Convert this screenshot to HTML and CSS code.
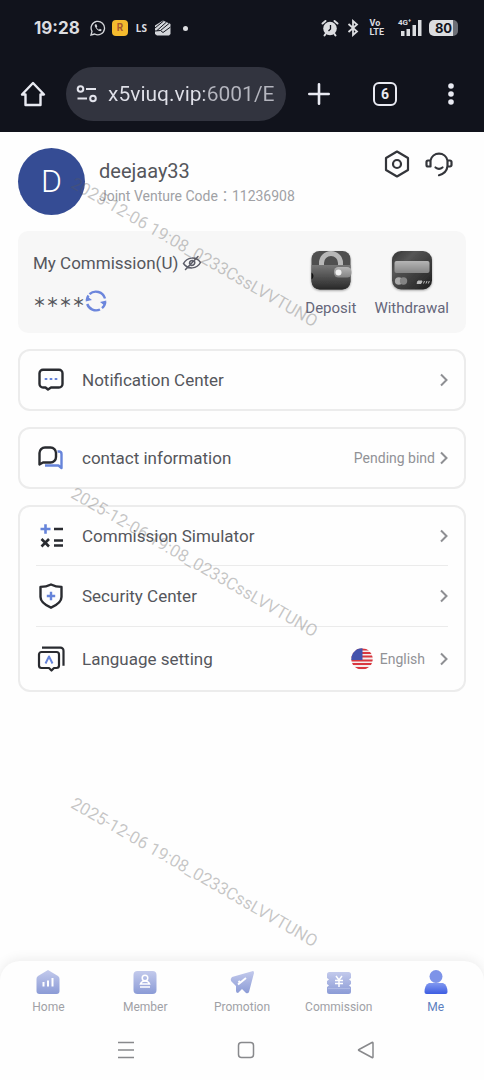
FILE: index.html
```html
<!DOCTYPE html>
<html lang="en">
<head>
<meta charset="utf-8">
<meta name="viewport" content="width=device-width, initial-scale=1">
<title>Me</title>
<link rel="stylesheet" href="styles.css">
</head>
<body>
<div class="screen">
  <header class="chrome">
    <div class="status">
      <span class="clock">19:28</span>
      <svg class="st" width="16" height="16" viewBox="0 0 16 16" fill="none" stroke="#d4d6da" stroke-width="1.3"><path d="M1 15l1-3.600A6.700 6.700 0 1 1 4.700 14z"/><path d="M5.300 4.300c-1 .8-.8 2.400 1.300 4.700 2.200 2.300 3.900 2.800 4.800 1.600l.3-.8-1.800-1-1 .9C8 9.400 6.900 8.300 6.600 7.300l.7-.9-.9-2.100z" fill="#d4d6da" stroke="none"/></svg>
      <span class="app-badge">R</span>
      <span class="ls">LS</span>
      <svg class="st" width="16" height="16" viewBox="0 0 16 16"><path d="M0 5.500L8 0.500 15.500 4v10L14 15.500H2L0 14z" fill="#d4d6da"/><path d="M0 8l8.500-7M2 10.500L11.500 2M5.500 10.500L14 3.500M0 11l5.500-.5L8 12.500 15.500 7" fill="none" stroke="#11131c" stroke-width="1"/></svg>
      <span class="dot"></span>
      <span class="fill"></span>
      <svg width="18" height="18" viewBox="0 0 18 18" fill="#dcdde0"><circle cx="9" cy="9.500" r="6.800"/><path d="M1.500 4.500L4.500 2M16.500 4.500L13.500 2M4.500 15l-1 1.500M13.500 15l1 1.500" stroke="#dcdde0" stroke-width="2" stroke-linecap="round"/><path d="M9.500 6v4L7.500 12" fill="none" stroke="#11131c" stroke-width="1.300"/></svg>
      <svg class="bt" width="12" height="18" viewBox="0 0 12 18" fill="none" stroke="#dcdde0" stroke-width="1.800"><path d="M1.500 5l8.500 7.500L6 16V2l4 3.500L1.500 13"/></svg>
      <span class="volte"><span>Vo</span><span>LTE</span></span>
      <span class="signal"><span class="gen">4G⁺</span>
        <svg width="22" height="18" viewBox="0 0 22 18" fill="#dcdde0"><path d="M1 12h3.500v5H1zM6.500 10H10v7H6.500zM12.500 6H16v11h-3.500zM18 1h3.500v16H18z"/></svg>
      </span>
      <span class="battery">80</span>
    </div>
    <div class="toolbar">
      <button class="tool" aria-label="Home"><svg width="26" height="26" viewBox="0 0 26 26" fill="none" stroke="#e9eaf2" stroke-width="2.400" stroke-linejoin="round"><path d="M2 13.500L13 2l11 11.500h-3.500V24h-15V13.500z"/></svg></button>
      <label class="url">
        <svg width="22" height="18" viewBox="0 0 22 18" fill="none" stroke="#e3e4ec" stroke-width="2"><circle cx="4.500" cy="4" r="2.800"/><circle cx="17" cy="13.500" r="2.800"/><path d="M10 4h10M1.500 13.500h9.500"/></svg>
        <input type="text" aria-label="Address" value="x5viuq.vip:6001/E">
      </label>
      <button class="tool" aria-label="New tab"><svg width="22" height="22" viewBox="0 0 22 22" stroke="#e9eaf2" stroke-width="2.600" stroke-linecap="round"><path d="M11 1.300v19.400M1.300 11h19.400"/></svg></button>
      <button class="tool" aria-label="Tabs"><span class="tabs-count">6</span></button>
      <button class="tool" aria-label="Menu"><svg width="6" height="22" viewBox="0 0 6 22" fill="#e9eaf2"><circle cx="3" cy="3" r="2.800"/><circle cx="3" cy="11" r="2.800"/><circle cx="3" cy="19" r="2.800"/></svg></button>
    </div>
  </header>

  <main class="page">
    <section class="profile">
      <span class="avatar">D</span>
      <div class="who">
        <h1 class="name">deejaay33</h1>
        <p class="code">Joint Venture Code：11236908</p>
      </div>
      <div class="actions">
        <button aria-label="Settings"><svg width="28" height="28" viewBox="0 0 28 28" fill="none" stroke="#33353a" stroke-width="2.200" stroke-linejoin="round"><path d="M14 1.500L25 8v12l-11 6.500L3 20V8z"/><circle cx="14" cy="14" r="4"/></svg></button>
        <button aria-label="Support"><svg width="28" height="28" viewBox="0 0 28 28" fill="none" stroke="#33353a" stroke-width="2.200" stroke-linecap="round" stroke-linejoin="round"><path d="M5.500 10.500a8.700 8.700 0 0 1 17 0v5.500c-.5 4.500-3.500 8-8.500 9.200M5.500 10.500H3a1.500 1.500 0 0 0-1.500 1.500v3A1.500 1.500 0 0 0 3 16.500h2.500zM22.500 10.500H25a1.500 1.500 0 0 1 1.500 1.500v3a1.500 1.500 0 0 1-1.500 1.500h-2.500M10.500 17.500q3.500 2.800 7 0"/></svg></button>
      </div>
    </section>

    <section class="wallet">
      <div class="balance">
        <div class="line">My Commission(U)
          <button aria-label="Show balance"><svg width="20" height="16" viewBox="0 0 20 16" fill="none" stroke="#5b5c68" stroke-width="1.500" stroke-linecap="round"><path d="M1.500 8.500C5 2 14 1 18.500 7.500 15 14 6 15 1.500 8.500zM3.500 14.500L16 1.500M12.500 6c1 2.500-.5 4.500-3.500 4.500M7.500 8.500c0-2 1-3 3-3"/></svg></button>
        </div>
        <div class="line amount">＊＊＊＊
          <button aria-label="Refresh"><svg width="22" height="22" viewBox="0 0 22 22" fill="none" stroke="#6c86dc" stroke-width="2.400"><path d="M4.500 4.200A9.400 9.400 0 0 1 20 8.500M20.300 11.500a9.400 9.400 0 0 1-3.300 6.700M15 19.500A9.400 9.400 0 0 1 2.200 14M1.700 10.500a9.400 9.400 0 0 1 1.800-5"/><path d="M15 12l4.500 3.500 1.800-5zM7 10L2.500 6.500.7 11.500z" fill="#6c86dc" stroke="none"/></svg></button>
        </div>
      </div>
      <button class="wallet-action">
        <svg width="44" height="44" viewBox="0 0 44 44"><defs><linearGradient id="g1" x2="0" y2="1"><stop stop-color="#777"/><stop offset="1" stop-color="#282828"/></linearGradient><linearGradient id="g2" x2="0" y2="1"><stop stop-color="#b5b5b5"/><stop offset="1" stop-color="#858585"/></linearGradient><filter id="sh" x="-20%" y="-20%" width="140%" height="150%"><feDropShadow dx="0" dy="1" stdDeviation="1.200" flood-opacity=".35"/></filter></defs><g filter="url(#sh)"><rect x="2.500" y="2" width="39" height="38.500" rx="8" fill="#505050"/><path d="M12.500 17V14a9.500 9.500 0 0 1 19 0v3" fill="none" stroke="#b8b8b8" stroke-width="5"/><path d="M2.500 16h39v16a8.500 8.500 0 0 1-8.500 8.500H11A8.500 8.500 0 0 1 2.500 32z" fill="url(#g1)"/></g><path d="M2.500 23.500q2 1 2 3.500t-2 3.500z" fill="#111"/><rect x="25" y="18" width="17.500" height="10.500" rx="4.500" fill="url(#g2)"/><circle cx="29.500" cy="23.500" r="3" fill="#f2f2f2"/></svg>
        Deposit
      </button>
      <button class="wallet-action">
        <svg width="44" height="44" viewBox="0 0 44 44"><defs><linearGradient id="g3" x2="1" y2="1"><stop stop-color="#333"/><stop offset=".3" stop-color="#555"/><stop offset="1" stop-color="#1e1e1e"/></linearGradient></defs><rect x="2" y="2" width="40" height="38.500" rx="9" fill="url(#g3)" filter="url(#sh)"/><rect x="4.500" y="12" width="35" height="12" rx="2" fill="url(#g2)"/><circle cx="8.700" cy="32" r="3.800" fill="#aaa"/><circle cx="13.500" cy="32" r="3.700" fill="#848484"/><path d="M27 34.500l1-2.500h4l-1 2.500zM33.500 34.500l1-2.500M36 34.500l1-2.500M38.300 34.500l1-2.500" fill="#bbb" stroke="#bbb"/></svg>
        Withdrawal
      </button>
    </section>

    <section class="box">
      <button class="row">
        <svg class="icon" width="28" height="28" viewBox="0 0 28 28" fill="none" stroke="#292b30" stroke-width="2.400" stroke-linejoin="round"><path d="M6 3.700h16a3.500 3.500 0 0 1 3.500 3.500V18a3.500 3.500 0 0 1-3.500 3.500h-8l-3 2-2.500-2H6A3.500 3.500 0 0 1 2.500 18V7.200A3.500 3.500 0 0 1 6 3.700z"/><path d="M7.700 13h2.600M12.700 13h2.600M17.700 13h2.600" stroke="#6684da" stroke-width="2"/></svg>
        <span class="label">Notification Center</span>
        <svg class="chev" width="8" height="14" viewBox="0 0 8 14"><path d="M1 1.500L6.500 7 1 12.500"/></svg>
      </button>
    </section>

    <section class="box">
      <button class="row">
        <svg class="icon" width="28" height="28" viewBox="0 0 28 28" fill="none" stroke-width="2.400" stroke-linejoin="round"><path d="M20.500 7.500h1.500a2.500 2.500 0 0 1 2.500 2.500v14l-3-2.500H8" stroke="#6684da"/><path d="M2.500 20.500V9a5.500 5.500 0 0 1 5.500-5.500h5.500a5.500 5.500 0 0 1 5.500 5.500v4a5.500 5.500 0 0 1-5.500 5.500H6z" stroke="#292b30" fill="#fff"/></svg>
        <span class="label">contact information</span>
        <span class="value">Pending bind</span>
        <svg class="chev" width="8" height="14" viewBox="0 0 8 14"><path d="M1 1.500L6.500 7 1 12.500"/></svg>
      </button>
    </section>

    <section class="box">
      <button class="row">
        <svg class="icon" width="28" height="28" viewBox="0 0 28 28" fill="none" stroke="#292b30" stroke-width="2.600"><path d="M3.500 7h10M8.500 2.200v9.600" stroke="#6684da"/><path d="M17 7h9M4.500 17l7.500 7.500M12 17l-7.500 7.500M17 18.500h9M17 23.500h9"/></svg>
        <span class="label">Commission Simulator</span>
        <svg class="chev" width="8" height="14" viewBox="0 0 8 14"><path d="M1 1.500L6.500 7 1 12.500"/></svg>
      </button>
      <button class="row">
        <svg class="icon" width="28" height="28" viewBox="0 0 28 28" fill="none" stroke="#292b30" stroke-width="2.400" stroke-linejoin="round"><path d="M14 2.500c3.500 1.800 6.500 2.400 10.500 2.400V15c0 4.500-4.500 8-10.500 10.700C8 23 3.500 19.500 3.500 15V4.900C7.500 4.900 10.500 4.300 14 2.500z"/><path d="M9.800 14h8.400M14 9.800v8.400" stroke="#6684da"/></svg>
        <span class="label">Security Center</span>
        <svg class="chev" width="8" height="14" viewBox="0 0 8 14"><path d="M1 1.500L6.500 7 1 12.500"/></svg>
      </button>
      <button class="row tall">
        <svg class="icon" width="28" height="28" viewBox="0 0 28 28" fill="none" stroke="#292b30" stroke-width="2.200" stroke-linejoin="round"><path d="M5 2.700h18.500a3 3 0 0 1 3 3v15"/><path d="M4.500 7h15A2.500 2.500 0 0 1 22 9.500v11a2.500 2.500 0 0 1-2.500 2.500H17l-2.500 2.500L12 23H4.500A2.500 2.500 0 0 1 2 20.500v-11A2.500 2.500 0 0 1 4.500 7z"/><path d="M8.500 18.500L12 11.500l3.500 7" stroke="#6684da" stroke-width="2"/></svg>
        <span class="label">Language setting</span>
        <svg class="flag" width="22" height="22" viewBox="0 0 22 22"><defs><clipPath id="c"><circle cx="11" cy="11" r="10.700"/></clipPath></defs><g clip-path="url(#c)"><path d="M0 0h22v22H0z" fill="#f4eeee"/><path d="M0 1.500h22M0 5h22M0 8.500h22M0 12.500h22M0 16h22M0 20h22" stroke="#d9373f" stroke-width="1.900"/><path d="M0 0h11.500v12H0z" fill="#4453ad"/></g></svg>
        <span class="value lang">English</span>
        <svg class="chev" width="8" height="14" viewBox="0 0 8 14"><path d="M1 1.500L6.500 7 1 12.500"/></svg>
      </button>
    </section>

    <div class="watermarks">
      <span>2025-12-06 19:08_0233CssLVVTUNO</span>
      <span>2025-12-06 19:08_0233CssLVVTUNO</span>
      <span>2025-12-06 19:08_0233CssLVVTUNO</span>
    </div>
  </main>

  <footer class="bottom">
    <nav class="tabbar">
      <a href="#home"><svg width="26" height="26" viewBox="0 0 26 26"><defs><linearGradient id="t" x2="0" y2="1"><stop stop-color="#c3caec"/><stop offset="1" stop-color="#8b9bd6"/></linearGradient></defs><path d="M13 1l10 6q1.500 1 1.500 3v12q0 3-3 3h-17q-3 0-3-3V10q0-2 1.500-3z" fill="url(#t)"/><path d="M8.500 13v4.500M13 11.500v6M17.500 9v8.500" stroke="#fff" stroke-width="2"/></svg>Home</a>
      <a href="#member"><svg width="26" height="26" viewBox="0 0 26 26"><rect x="1.500" y="2" width="23" height="23" rx="4" fill="url(#t)"/><circle cx="13" cy="9" r="2.800" fill="none" stroke="#fff" stroke-width="1.500"/><path d="M8.500 15q1-3 4.500-3t4.500 3zM8 18h10" fill="none" stroke="#fff" stroke-width="1.600"/></svg>Member</a>
      <a href="#promotion"><svg width="26" height="26" viewBox="0 0 26 26"><path d="M24 2q1 0 1 2l-5 19q-1 2-3 1l-4-4-4 4q-2 0-2-2v-5l-5-5q-1-2 1-4z" fill="url(#t)"/><path d="M9 15.500L17 9M9.500 12l2 2" stroke="#fff" stroke-width="2"/></svg>Promotion</a>
      <a href="#commission"><svg width="26" height="26" viewBox="0 0 26 26"><path d="M3.500 3h19q2.500 0 2.500 2.500V9l-2 1.500 2 1.500v3l-2 1.500 2 1.500v4.500q0 2.500-2.500 2.500h-19Q1 25 1 22.500V18l2-1.500L1 15v-3l2-1.500L1 9V5.500Q1 3 3.500 3z" fill="url(#t)"/><path d="M10 7l3 4 3-4M9 11.500h8M9 14.500h8M13 11v7" fill="none" stroke="#fff" stroke-width="1.500"/><path d="M2 19.500h22" stroke="#aeb9e4"/></svg>Commission</a>
      <a href="#me" class="active"><svg width="26" height="26" viewBox="0 0 26 26"><defs><linearGradient id="m" x2="0" y2="1"><stop stop-color="#8198ef"/><stop offset="1" stop-color="#3d5de2"/></linearGradient></defs><path d="M6 14h14q4.500 2 4.500 9 0 2-2 2h-19q-2 0-2-2 0-7 4.500-9z" fill="url(#m)"/><circle cx="13" cy="7.500" r="6.500" fill="#7d93e8"/></svg>Me</a>
    </nav>
    <div class="sysnav">
      <button aria-label="Recent apps"><svg width="18" height="18" viewBox="0 0 18 18"><path d="M1 1.500h16M1 9h16M1 16.500h16"/></svg></button>
      <button aria-label="Home screen"><svg width="18" height="18" viewBox="0 0 18 18"><rect x="1.500" y="1.500" width="15" height="15" rx="3"/></svg></button>
      <button aria-label="Back"><svg width="18" height="18" viewBox="0 0 18 18"><path d="M16 2v14q0 1-1 .5L2 9.500q-1-.5 0-1L15 1.500q1-.5 1 .5z"/></svg></button>
    </div>
  </footer>
</div>
</body>
</html>
```
FILE: styles.css
```css
* { box-sizing: border-box; }
body {
  margin: 0;
  background: #fefefe;
  color: #55565c;
  font-family: Roboto, "Noto Sans CJK TC", sans-serif;
}
button {
  border: 0;
  padding: 0;
  background: none;
  color: inherit;
  font: inherit;
  cursor: pointer;
}
svg { display: block; flex: none; }
.screen { display: flex; flex-direction: column; min-height: 100vh; }

/* browser chrome */
.chrome { background: #11131c; color: #dcdde0; }
.status {
  display: flex;
  align-items: center;
  height: 56px;
  padding: 0 26px 0 34px;
}
.clock { font: 700 17px Inter, sans-serif; margin-right: 10px; }
.app-badge {
  width: 16px;
  height: 16px;
  margin: 0 8px 0 6px;
  border-radius: 4px;
  background: #f5bb2e;
  color: #a8582f;
  font-size: 10px;
  font-weight: 700;
  line-height: 16px;
  text-align: center;
}
.ls { margin-right: 8px; font: 700 10px "Noto Sans", sans-serif; }
.dot { width: 5px; height: 5px; margin-left: 12px; border-radius: 50%; background: #dcdde0; }
.fill { flex: 1; }
.bt { margin: 0 10px 0 8px; }
.volte {
  display: flex;
  flex-direction: column;
  font: 700 9px/9px Roboto, sans-serif;
}
.signal { position: relative; margin: 0 7px 0 16px; }
.gen { position: absolute; left: -2px; top: 0; font: 700 8px/8px Roboto, sans-serif; }
.battery {
  width: 29px;
  height: 16px;
  border-radius: 5px;
  background: linear-gradient(90deg, #dcdde0 82%, #6d6f76 82%);
  color: #11131c;
  font: 700 13px/16px Inter, sans-serif;
  text-align: center;
}
.toolbar { display: flex; align-items: center; height: 76px; }
.tool { display: grid; place-items: center; width: 66px; height: 52px; }
.url {
  display: flex;
  flex: 1;
  align-items: center;
  min-width: 0;
  height: 54px;
  padding: 0 8px 0 10px;
  gap: 10px;
  border-radius: 27px;
  background: #32343f;
}
.url input {
  flex: 1;
  min-width: 0;
  width: 100%;
  padding: 0;
  border: 0;
  background: linear-gradient(90deg, #dfe0e8 96px, #b5b6bf 96px);
  background-clip: text;
  -webkit-background-clip: text;
  color: transparent;
  font: 21px Roboto, sans-serif;
}
.tabs-count {
  width: 24px;
  height: 24px;
  border: 2px solid #e9eaf2;
  border-radius: 6px;
  color: #e9eaf2;
  font: 700 14px/20px Roboto, sans-serif;
}

/* page */
.page {
  position: relative;
  display: flex;
  flex: 1;
  flex-direction: column;
  gap: 16px;
  padding: 16px 18px;
}
.profile { display: flex; gap: 14px; }
.avatar {
  width: 67px;
  height: 67px;
  border-radius: 50%;
  background: #354c94;
  color: #fff;
  font-size: 32px;
  font-weight: 300;
  line-height: 67px;
  text-align: center;
}
.who { flex: 1; padding-top: 10px; }
.name { margin: 0; font-size: 20px; font-weight: 400; line-height: 26px; }
.code { margin: 0; color: #a0a1a5; font-size: 14px; line-height: 24px; white-space: nowrap; }
.actions { display: flex; align-items: flex-start; gap: 14px; padding-right: 13px; }
.actions button { height: 32px; }
.wallet {
  display: flex;
  align-items: flex-start;
  gap: 18px;
  padding: 18px 17px 14px 15px;
  border-radius: 10px;
  background: #f7f7f7;
}
.balance { flex: 1; }
.line { display: flex; align-items: center; gap: 4px; height: 27px; font-size: 17px; }
.amount { gap: 0; height: 36px; margin-top: 7px; font-size: 13px; font-weight: 700; }
.wallet-action {
  display: flex;
  flex-direction: column;
  align-items: center;
  gap: 4px;
  color: #65667a;
  font-size: 15px;
  line-height: 22px;
}
.box { padding: 0 16px; border: 2px solid #ececec; border-radius: 12px; }
.row {
  display: flex;
  align-items: center;
  width: 100%;
  height: 58px;
  text-align: left;
}
.row + .row { height: 61px; border-top: 1px solid #ebebeb; }
.row + .tall { height: 64px; }
.icon { margin-left: 1px; }
.label { flex: 1; margin-left: 17px; font-size: 17px; }
.value { margin-right: 5px; color: #919296; font-size: 14px; }
.flag { margin-right: 7px; }
.lang { margin-right: 15px; }
.chev { fill: none; stroke: #8e8f93; stroke-width: 2; }

/* repeated diagonal stamp laid over the content */
.watermarks {
  position: absolute;
  top: -35px;
  left: 0;
  display: grid;
  grid-auto-rows: 310px;
  width: 390px;
  place-items: center;
  pointer-events: none;
}
.watermarks span { color: rgba(90, 90, 90, .34); font-size: 17px; white-space: nowrap; transform: rotate(30deg); }

/* bottom bars */
.bottom { position: relative; background: #fefefe; border-radius: 20px 20px 0 0; box-shadow: 0 -2px 12px rgba(0, 0, 0, .07); }
.tabbar { display: grid; grid-template-columns: repeat(5, 1fr); padding-top: 8px; }
.tabbar a {
  display: flex;
  flex-direction: column;
  align-items: center;
  gap: 3px;
  color: #a0a1a6;
  font-size: 12px;
  line-height: 18px;
  text-decoration: none;
}
.tabbar .active { color: #5c7fc0; }
.sysnav { display: flex; justify-content: center; gap: 60px; height: 64px; padding-left: 8px; }
.sysnav button { display: grid; place-items: center; width: 60px; height: 68px; }
.sysnav svg { fill: none; stroke: #88898c; stroke-width: 1.500; }
```
